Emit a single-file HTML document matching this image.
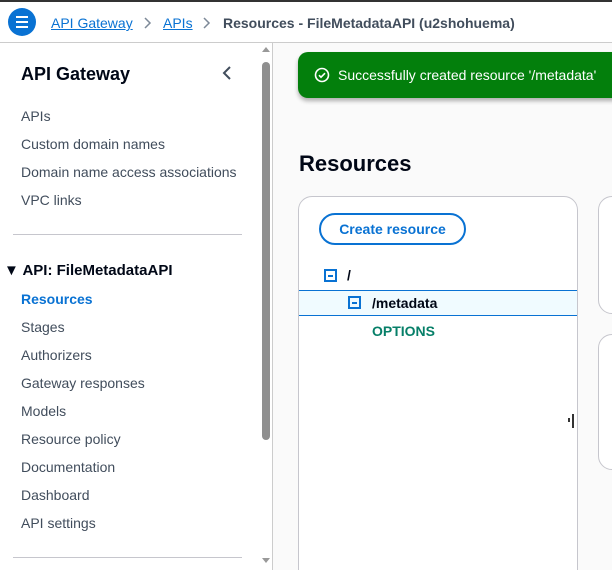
<!DOCTYPE html>
<html style="width:612px;height:570px;overflow:hidden"><head><meta charset="utf-8"><style>
*{box-sizing:border-box;margin:0;padding:0}
body{width:612px;height:570px;overflow:hidden;font-family:"Liberation Sans",sans-serif;background:#fafafa;position:relative}
.top{position:absolute;left:0;top:0;width:612px;height:2px;background:#333}
.hdr{position:absolute;left:0;top:2px;width:612px;height:41px;background:#fff;border-bottom:1px solid #ccc}
.burger{position:absolute;left:8px;top:6px;width:28px;height:28px;border-radius:50%;background:#0972d3}
.burger i{position:absolute;left:8px;width:12px;height:2px;background:#fff}
.bc{position:absolute;top:13px;font-size:14px}
.bc a{color:#0972d3;text-decoration:underline}
.side{position:absolute;left:0;top:43px;width:258px;height:527px;background:#fff}
.sb{position:absolute;left:258px;top:43px;width:15px;height:527px;background:#fff;border-right:1px solid #ccc}
.thumb{position:absolute;left:262px;top:62px;width:8px;height:378px;background:#8f8f8f;border-radius:4px}
.nav{position:absolute;left:21px;font-size:14px;color:#414d5c}
.hr{position:absolute;left:13px;width:229px;height:1px;background:#c6c6cd}
.toast{position:absolute;left:298px;top:52px;width:330px;height:46px;background:#037f0c;border-radius:10px;color:#fff;font-size:14px;box-shadow:0 3px 4px rgba(0,0,0,.3)}
.card{position:absolute;background:#fff;border:1px solid #c6c6cd;border-radius:14px}
</style></head><body>
<div class="top"></div>
<div class="hdr">
<div class="burger"><i style="top:8px"></i><i style="top:13px"></i><i style="top:18px"></i></div>
<div class="bc" style="left:51px"><a>API Gateway</a></div>
<svg style="position:absolute;left:143px;top:14px" width="10" height="14" viewBox="0 0 10 14"><path d="M2 2l5 5-5 5" fill="none" stroke="#7d8998" stroke-width="1.5"/></svg>
<div class="bc" style="left:163px"><a>APIs</a></div>
<svg style="position:absolute;left:202px;top:14px" width="10" height="14" viewBox="0 0 10 14"><path d="M2 2l5 5-5 5" fill="none" stroke="#7d8998" stroke-width="1.5"/></svg>
<div class="bc" style="left:223px;color:#414d5c;font-weight:bold">Resources - FileMetadataAPI (u2shohuema)</div>
</div>
<div class="side"></div>
<div class="sb"></div>
<div class="thumb"></div>
<div style="position:absolute;left:262px;top:47px;width:0;height:0;border:4px solid transparent;border-bottom:5px solid #999;border-top:0"></div>
<div style="position:absolute;left:262px;top:558px;width:0;height:0;border:4px solid transparent;border-top:5px solid #999;border-bottom:0"></div>
<div class="nav" style="top:64px;font-size:18px;font-weight:bold;color:#000716">API Gateway</div>
<svg style="position:absolute;left:222px;top:66px" width="10" height="14" viewBox="0 0 10 14"><path d="M8 1L2 7l6 6" fill="none" stroke="#414d5c" stroke-width="2"/></svg>
<div class="nav" style="top:108px">APIs</div>
<div class="nav" style="top:136px">Custom domain names</div>
<div class="nav" style="top:164px">Domain name access associations</div>
<div class="nav" style="top:192px">VPC links</div>
<div class="hr" style="top:234px"></div>
<div class="nav" style="left:4px;top:262px;font-size:15px;font-weight:bold;color:#000716">&#9660; API: FileMetadataAPI</div>
<div class="nav" style="top:291px;color:#0972d3;font-weight:bold">Resources</div>
<div class="nav" style="top:319px">Stages</div>
<div class="nav" style="top:347px">Authorizers</div>
<div class="nav" style="top:375px">Gateway responses</div>
<div class="nav" style="top:403px">Models</div>
<div class="nav" style="top:431px">Resource policy</div>
<div class="nav" style="top:459px">Documentation</div>
<div class="nav" style="top:487px">Dashboard</div>
<div class="nav" style="top:515px">API settings</div>
<div class="hr" style="top:557px"></div>
<div class="toast">
<svg style="position:absolute;left:16px;top:15px" width="16" height="16" viewBox="0 0 16 16"><circle cx="8" cy="8" r="6.5" fill="none" stroke="#fff" stroke-width="1.6"/><path d="M5 8.2l2 2 4-4" fill="none" stroke="#fff" stroke-width="1.6"/></svg>
<div style="position:absolute;left:40px;top:15px">Successfully created resource '/metadata'</div>
</div>
<div style="position:absolute;left:299px;top:151px;font-size:22px;font-weight:bold;color:#000716">Resources</div>
<div class="card" style="left:298px;top:196px;width:280px;height:400px"></div>
<div class="card" style="left:598px;top:196px;width:40px;height:118px"></div>
<div class="card" style="left:598px;top:334px;width:40px;height:136px"></div>
<div style="position:absolute;left:319px;top:213px;width:147px;height:32px;border:2px solid #0972d3;border-radius:16px;color:#0972d3;font-weight:bold;font-size:14px;text-align:center;line-height:28px">Create resource</div>
<div style="position:absolute;left:324px;top:269px;width:13px;height:13px;border:2px solid #0972d3"><div style="position:absolute;left:2px;top:3.5px;width:5px;height:2px;background:#0972d3"></div></div>
<div style="position:absolute;left:347px;top:267px;font-weight:bold;font-size:14px;color:#000716">/</div>
<div style="position:absolute;left:299px;top:290px;width:278px;height:26px;background:#f0fbff;border-top:1px solid #0972d3;border-bottom:1px solid #0972d3"></div>
<div style="position:absolute;left:348px;top:296px;width:13px;height:13px;border:2px solid #0972d3"><div style="position:absolute;left:2px;top:3.5px;width:5px;height:2px;background:#0972d3"></div></div>
<div style="position:absolute;left:372px;top:295px;font-weight:bold;font-size:14px;color:#000716">/metadata</div>
<div style="position:absolute;left:372px;top:323px;font-weight:bold;font-size:14px;color:#067f68">OPTIONS</div>
<div style="position:absolute;left:568px;top:418px;width:2px;height:4px;background:#333"></div>
<div style="position:absolute;left:572px;top:414px;width:2px;height:14px;background:#333"></div>
</body></html>
